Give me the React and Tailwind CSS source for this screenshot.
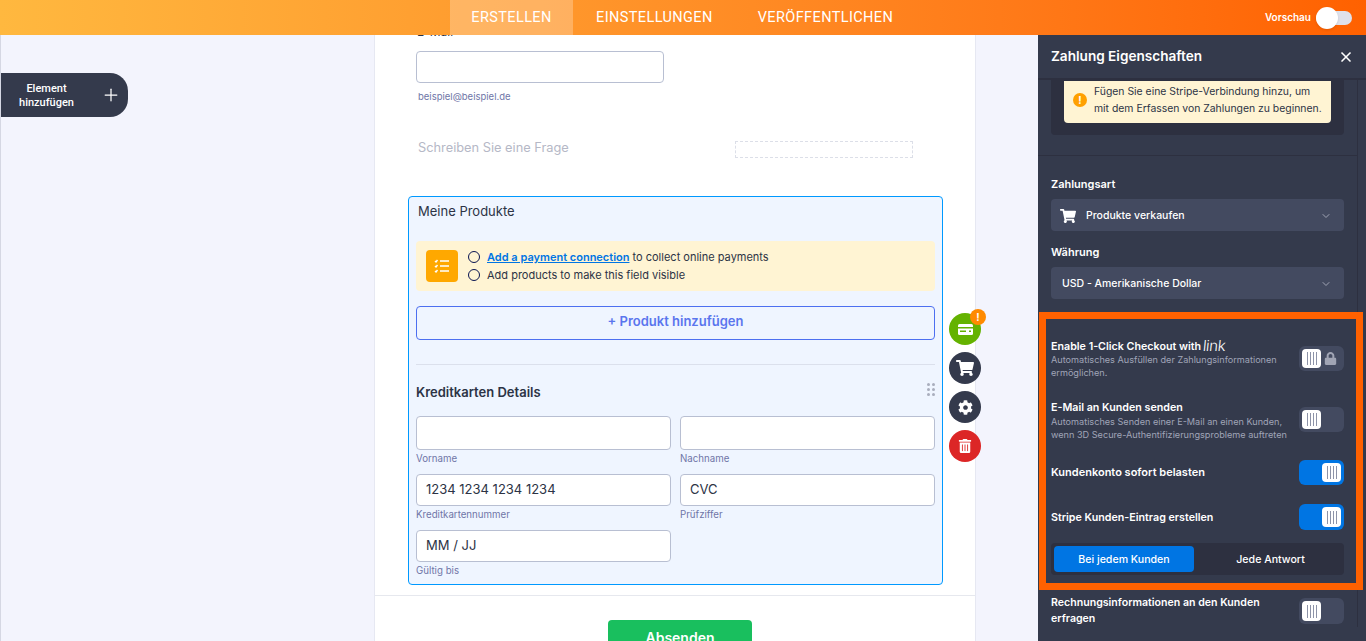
import React from 'react'
import { ChevronDown, Plus, X } from 'lucide-react'
import { FaShoppingCart, FaCog, FaLock, FaTrashAlt } from 'react-icons/fa'

function Toggle({ on, lock, tall, className = '' }) {
  return (
    <div className={`flex w-[45px] shrink-0 items-center rounded-md p-[3px] ${tall ? 'h-[26px]' : 'h-[25px]'} ${on ? 'justify-end bg-[#0075e3]' : 'justify-between bg-[#434a60]'} ${className}`}>
      <div className="flex h-full w-[19px] items-center justify-center gap-[2px] rounded bg-white">
        <span className="h-[13px] w-px bg-[#8d93a8]" />
        <span className="h-[13px] w-px bg-[#8d93a8]" />
        <span className="h-[13px] w-px bg-[#8d93a8]" />
        <span className="h-[13px] w-px bg-[#8d93a8]" />
      </div>
      {lock && <FaLock className="mr-[4px] text-[13px] text-[#a0a4b4]" />}
    </div>
  )
}

function Field({ label, value, tall }) {
  return (
    <div>
      <div className={`flex w-full items-center rounded border border-[#b8bfd2] bg-white pl-[9px] text-[13px] text-[#2c3345] ${tall ? 'h-[34px]' : 'h-[32px]'}`}>
        {value}
      </div>
      <div className="mt-[2px] text-[9.7px] leading-[14px] text-[#6f76a7]">{label}</div>
    </div>
  )
}

function Select({ children }) {
  return (
    <div className="mx-[13px] mt-[7px] flex h-[32px] w-[293px] items-center rounded bg-[#434a60] px-[11px] pt-px text-[10.5px] font-medium text-white">
      {children}
      <ChevronDown className="ml-auto mr-px text-[#a0a4b4]" size={12} />
    </div>
  )
}

export default function App() {
  return (
    <div className="flex h-[641px] w-[1366px] flex-col overflow-hidden font-['Inter',sans-serif] text-[#2c3345]">
      <header className="z-10 flex h-[35px] shrink-0 items-center bg-linear-to-r from-[#ffb83f] to-[#ff6100] pl-[450px] font-['Roboto',sans-serif] text-[14.5px] tracking-[0.4px] text-white">
        <div className="flex h-full w-[123px] items-center justify-center bg-white/25">ERSTELLEN</div>
        <div className="ml-[23px]">EINSTELLUNGEN</div>
        <div className="ml-[45px]">VERÖFFENTLICHEN</div>
        <div className="ml-auto mr-[14px] flex items-center gap-[5px]">
          <span className="font-['Inter',sans-serif] text-[10px] font-semibold tracking-normal">Vorschau</span>
          <div className="relative h-[14px] w-[36px] rounded-full bg-[#dfe1ea]">
            <div className="absolute -top-[4px] left-0 h-[22px] w-[22px] rounded-full bg-white shadow" />
          </div>
        </div>
      </header>

      <div className="flex min-h-0 flex-1">
        <main className="relative w-[1038px] shrink-0 overflow-hidden border-l border-[#d5d7e3] bg-[#f3f4fd]">
          <div className="absolute -left-px top-[38px] flex h-[44px] w-[128px] items-center rounded-r-[18px] bg-[#343a4c] pr-[7px] text-white">
            <div className="w-[93px] pt-px text-center font-['Roboto',sans-serif] text-[11px] font-medium leading-[14px]">Element<br />hinzufügen</div>
            <Plus className="ml-auto" size={20} strokeWidth={1.5} />
          </div>

          <div className="relative -mt-[12px] ml-[373px] h-[700px] w-[602px] border-x border-[#e6e8f2] bg-white">
            <div className="pl-[42px] pt-px text-[12px] leading-[16px]">E-Mail</div>
            <div className="ml-[41px] mt-[11px] h-[32px] w-[248px] rounded border border-[#b8bfd2] bg-white" />
            <div className="ml-[43px] mt-[7px] text-[9.5px] leading-[14px] text-[#6f76a7]">beispiel@beispiel.de</div>
            <div className="mt-[34px] flex h-[20px] items-start pl-[43px] pr-[62px]">
              <span className="pt-px text-[12.8px] leading-[18px] text-[#b5b8c6]">Schreiben Sie eine Frage</span>
              <div className="ml-auto mt-[3px] h-[17px] w-[178px] border border-dashed border-[#dcdfe8]" />
            </div>

            <div className="relative ml-[33px] mt-[38px] h-[389px] w-[535px] rounded border border-[#0099ff] bg-[#eff5ff] px-[7px]">
              <div className="pl-[2px] pt-[5px] text-[13px] leading-[18px]">Meine Produkte</div>
              <div className="mt-[21px] flex h-[50px] items-center rounded-sm bg-[#fff4d3] pl-[10px] text-[11px] leading-[18px]">
                <div className="flex h-[32px] w-[32px] items-center justify-center rounded-sm bg-[#ffa800]">
                  <svg width="16" height="14" viewBox="0 0 16 14" fill="none" stroke="#fff" strokeWidth="1.4">
                    <path d="M6 2h9M6 7h9M6 12h9M1 2l1 1 1.5-2M1 7l1 1 1.5-2M1 12l1 1 1.5-2" />
                  </svg>
                </div>
                <div className="ml-[10px]">
                  <div className="flex items-center gap-[7px]">
                    <span className="h-[12px] w-[12px] rounded-full border border-[#0a1551]" />
                    <span><a className="font-semibold text-[#0075e3] underline">Add a payment connection</a> to collect online payments</span>
                  </div>
                  <div className="flex items-center gap-[7px]">
                    <span className="h-[12px] w-[12px] rounded-full border border-[#0a1551]" />
                    <span>Add products to make this field visible</span>
                  </div>
                </div>
              </div>
              <div className="mt-[15px] flex h-[34px] items-center justify-center rounded-sm border border-[#4d6ff0] pb-[2px] text-[13px] font-semibold text-[#5a75ee]">
                + Produkt hinzufügen
              </div>
              <div className="mt-[24px] border-t border-[#dbe0ec]" />
              <div className="relative mt-[18px] text-[13px] font-semibold leading-[18px]">
                Kreditkarten Details
                <div className="absolute right-0 top-0 grid grid-cols-2 gap-[2px]">
                  {[0, 1, 2, 3, 4, 5].map((i) => (
                    <span key={i} className="h-[3px] w-[3px] rounded-full bg-[#a9aebd]" />
                  ))}
                </div>
              </div>
              <div className="mt-[15px] grid grid-cols-2 gap-x-[9px] gap-y-[8px]">
                <Field label="Vorname" tall />
                <Field label="Nachname" tall />
                <Field label="Kreditkartennummer" value="1234 1234 1234 1234" />
                <Field label="Prüfziffer" value="CVC" />
                <Field label="Gültig bis" value="MM / JJ" />
              </div>

              <div className="absolute -right-[39px] top-[116px] flex flex-col gap-[7px] text-white">
                <div className="relative flex h-[32px] w-[32px] items-center justify-center rounded-full bg-[#64b200]">
                  <svg width="15" height="11" viewBox="0 0 15 11">
                    <rect width="15" height="11" rx="1.5" fill="#fff" />
                    <rect x="0" y="3" width="15" height="1.5" fill="#64b200" />
                    <rect x="2" y="6.5" width="6" height="1.5" fill="#64b200" />
                    <rect x="11" y="6.5" width="2" height="1.5" fill="#64b200" />
                  </svg>
                  <span className="absolute -right-[5px] -top-[4px] flex h-[16px] w-[16px] items-center justify-center rounded-full bg-[#ff8a00] text-[10px] font-bold">!</span>
                </div>
                <div className="flex h-[32px] w-[32px] items-center justify-center rounded-full bg-[#343a4c]"><FaShoppingCart size={18} /></div>
                <div className="flex h-[32px] w-[32px] items-center justify-center rounded-full bg-[#343a4c]"><FaCog size={15} /></div>
                <div className="flex h-[32px] w-[32px] items-center justify-center rounded-full bg-[#dc2626]"><FaTrashAlt size={14} /></div>
              </div>
            </div>

            <div className="mt-[10px] border-t border-[#e6e8ee]" />
            <div className="ml-[233px] mt-[24px] flex h-[44px] w-[144px] items-start justify-center rounded bg-[#19bf5e] pt-[7px] text-[14px] font-semibold text-white">Absenden</div>
          </div>
        </main>

        <aside className="w-[328px] shrink-0 bg-[#343a4c] text-white">
          <div className="flex h-[45px] items-center justify-between border-b-2 border-[#2d3040] pl-[13px] pr-[12px]">
            <span className="text-[13.6px] font-semibold">Zahlung Eigenschaften</span>
            <X size={16} strokeWidth={2.5} />
          </div>
          <div className="w-[320px] border-r border-[#2d3040]">
            <div className="border-b border-[#2d3040] pb-[20px]">
              <div className="mx-[13px] w-[293px] rounded-b bg-[#2d3040] px-[13px] pb-[12px] pt-px">
                <div className="flex h-[42px] items-center rounded-b-sm bg-[#fff4d3] pb-[4px] pl-[9px] text-[10.4px] leading-[17px] text-[#2c3345]">
                  <span className="flex h-[14px] w-[14px] shrink-0 items-center justify-center rounded-full bg-[#ffa000] text-[10px] font-bold text-white">!</span>
                  <span className="ml-[7px] whitespace-nowrap">Fügen Sie eine Stripe-Verbindung hinzu, um<br />mit dem Erfassen von Zahlungen zu beginnen.</span>
                </div>
              </div>
            </div>

            <div className="mt-[20px] px-[13px] text-[11px] font-semibold leading-[16px]">Zahlungsart</div>
            <Select>
              <FaShoppingCart className="mr-[10px] text-[16px] -ml-[2px]" />
              Produkte verkaufen
            </Select>
            <div className="mt-[13px] px-[13px] text-[11px] font-semibold leading-[16px]">Währung</div>
            <Select>USD - Amerikanische Dollar</Select>

            <div className="ml-px mt-[13px] w-[324px] border-[7px] border-[#ff6100] pb-[8px] pl-[5px] pr-[12px] pt-[20px]">
              <div className="flex h-[40px] items-center justify-between">
                <div className="text-[9.15px] leading-[13px] text-[#a0a5b8]">
                  <div className="flex h-[14px] items-center text-[10.7px] font-semibold text-white">
                    Enable 1-Click Checkout with
                    <span className="ml-[2px] -skew-x-6 text-[15px] font-light leading-[14px] tracking-tight">link</span>
                  </div>
                  Automatisches Ausfüllen der Zahlungsinformationen<br />ermöglichen.
                </div>
                <Toggle lock className="-mt-[2px]" />
              </div>
              <div className="mt-[22px] flex h-[40px] items-center justify-between">
                <div className="text-[9.15px] leading-[13px] text-[#a0a5b8]">
                  <div className="h-[14px] text-[10.7px] font-semibold leading-[14px] text-white">E-Mail an Kunden senden</div>
                  Automatisches Senden einer E-Mail an einen Kunden,<br />wenn 3D Secure-Authentifizierungsprobleme auftreten
                </div>
                <Toggle className="-mt-[4px]" />
              </div>
              <div className="mt-[19px] flex items-center justify-between text-[11px] font-semibold">
                Kundenkonto sofort belasten
                <Toggle on />
              </div>
              <div className="mt-[19px] flex items-center justify-between text-[10.7px] font-semibold">
                <span className="pt-[2px]">Stripe Kunden-Eintrag erstellen</span>
                <Toggle on tall />
              </div>
              <div className="mt-[13px] flex h-[32px] items-center rounded bg-[#2d3040] p-[3px] text-[10.6px] font-medium">
                <div className="flex h-full w-[140px] items-center justify-center rounded-sm bg-[#0075e3] pt-px">Bei jedem Kunden</div>
                <div className="flex flex-1 items-center justify-center pl-[6px] pt-px">Jede Antwort</div>
              </div>
            </div>

            <div className="mt-[5px] flex items-center justify-between px-[13px] text-[10.6px] font-semibold leading-[16px]">
              <span>Rechnungsinformationen an den Kunden<br />erfragen</span>
              <Toggle tall />
            </div>
          </div>
        </aside>
      </div>
    </div>
  )
}
